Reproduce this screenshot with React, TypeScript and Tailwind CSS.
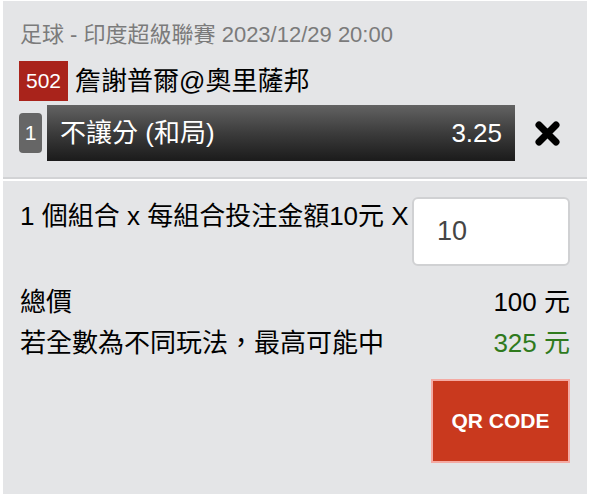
export default function App() {
  return (
    <div className="min-h-[494px] bg-white pl-[3px] pr-[8px] pt-[1px] font-['Liberation_Sans','Noto_Sans_CJK_TC',sans-serif]">
      {/* selection panel */}
      <div className="border-b-2 border-[#d2d3d5] bg-[#e4e5e7] pb-[16px] pl-[16px] pr-[10px] pt-[20px]">
        <div className="pl-[1px] text-[22px] leading-[28px] text-[#7b7b7b]">
          足球 - 印度超級聯賽 2023/12/29 20:00
        </div>

        <div className="mt-[12px] flex items-center gap-[7px]">
          <span className="flex h-[40px] w-[49px] items-center justify-center bg-[#a9231b] text-[21px] text-white">
            502
          </span>
          <span className="text-[26px] leading-[30px] text-black">詹謝普爾@奧里薩邦</span>
        </div>

        <div className="mt-[4px] flex items-center">
          <span className="flex h-[40px] w-[23px] items-center justify-center rounded-[4px] bg-[#666666] text-[21px] text-white">
            1
          </span>
          <div className="ml-[5px] flex h-[56px] w-[468px] items-center justify-between bg-linear-to-b from-[#636363] via-[#3c3c3c] to-[#1b1b1b] px-[13px] text-[26px] text-white">
            <span>不讓分 (和局)</span>
            <span>3.25</span>
          </div>
          <button type="button" className="ml-[20px] flex h-[25px] w-[25px] items-center justify-center">
            <svg width="25" height="25" viewBox="0 0 25 25">
              <path d="M4 4 L21 21 M21 4 L4 21" stroke="#000" strokeWidth="7" strokeLinecap="round" />
            </svg>
          </button>
        </div>
      </div>

      {/* summary panel */}
      <div className="mt-[2px] min-h-[313px] bg-[#e4e5e7] px-[17px] pt-[16px] text-[26px] text-black">
        <div className="flex items-start justify-between">
          <span className="mt-[4px] leading-[30px]">1 個組合 x 每組合投注金額10元 X</span>
          <div className="flex h-[69px] w-[158px] items-center rounded-[6px] border-2 border-[#d0d1d3] bg-white pl-[23px] text-[27px] text-[#454545]">
            10
          </div>
        </div>

        <div className="mt-[16px] leading-[41px]">
          <div className="flex justify-between">
            <span>總價</span>
            <span>100 元</span>
          </div>
          <div className="flex justify-between">
            <span>若全數為不同玩法，最高可能中</span>
            <span className="text-[#2f7a1d]">325 元</span>
          </div>
        </div>

        <div className="mt-[15px] flex justify-end">
          <button
            type="button"
            className="flex h-[84px] w-[139px] items-center justify-center border-2 border-[#f4aaa3] bg-[#c9391e] text-[21px] font-bold text-white"
          >
            QR CODE
          </button>
        </div>
      </div>
    </div>
  );
}
